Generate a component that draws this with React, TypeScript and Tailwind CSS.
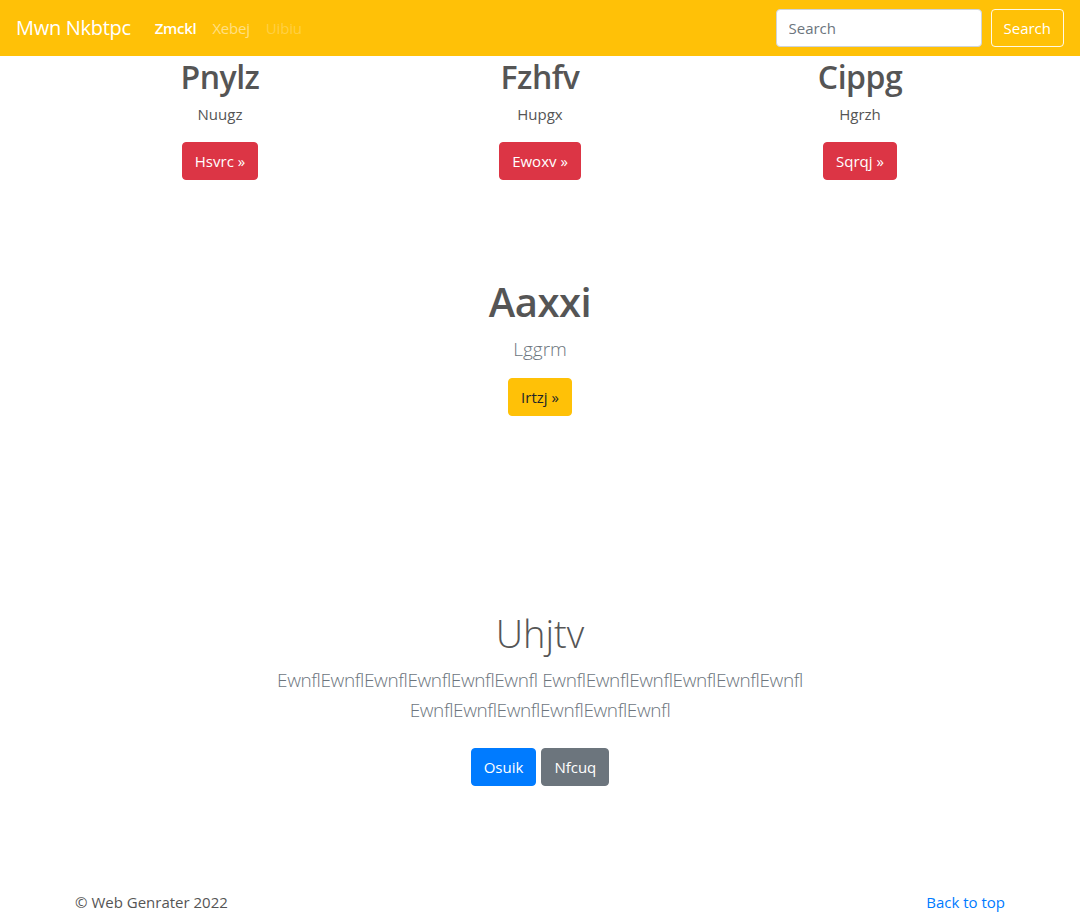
import React from 'react';

const features = [
  { title: 'Pnylz', text: 'Nuugz', cta: 'Hsvrc' },
  { title: 'Fzhfv', text: 'Hupgx', cta: 'Ewoxv' },
  { title: 'Cippg', text: 'Hgrzh', cta: 'Sqrqj' },
];

const font = { fontFamily: '"Open Sans", "Noto Sans", Arial, sans-serif' };

export default function App() {
  return (
    <div className="min-h-[914px] bg-white text-[#555] text-base leading-6" style={font}>
      {/* Navbar */}
      <nav className="h-14 bg-[#ffc107] flex items-center px-4">
        <a href="#" className="text-xl text-white mr-4 leading-[30px] tracking-[-0.3px]">Mwn Nkbtpc</a>
        <ul className="flex items-center">
          <li><a href="#" className="block px-2 text-white font-semibold text-[15px] tracking-[-0.3px]">Zmckl</a></li>
          <li><a href="#" className="block px-2 text-white/50 text-[15px] tracking-[-0.2px]">Xebej</a></li>
          <li><span className="block px-2 text-white/25 text-[15px] tracking-[-0.2px]">Uibiu</span></li>
        </ul>
        <form className="ml-auto flex items-center" onSubmit={e => e.preventDefault()}>
          <input
            type="text"
            placeholder="Search"
            className="w-[206px] h-[38px] px-3 rounded border border-[#ced4da] bg-white text-[15px] placeholder:text-[#6c757d] outline-none mr-[9px]"
          />
          <button className="h-[38px] px-3 rounded border border-white/90 text-white text-[15px]">Search</button>
        </form>
      </nav>

      {/* Feature columns */}
      <section className="w-[960px] mx-auto px-[15px]">
        <div className="grid grid-cols-3 -mx-[15px]">
          {features.map(f => (
            <div key={f.title} className="px-[15px] text-center">
              <h2 className="text-[32px] leading-[38px] pt-[2px] font-semibold tracking-[-0.5px] mb-[6px]">{f.title}</h2>
              <p className="text-[15px] leading-6 mb-4">{f.text}</p>
              <a href="#" className="inline-block h-[38px] leading-[36px] px-3 rounded bg-[#dc3545] border border-[#dc3545] text-white text-[15px]">
                {f.cta} &raquo;
              </a>
            </div>
          ))}
        </div>
      </section>

      {/* Middle call to action */}
      <section className="text-center pt-[98px]">
        <h1 className="text-[40px] leading-[48px] font-semibold tracking-[-0.5px] mb-2">Aaxxi</h1>
        <p className="text-[19px] leading-[30px] font-light text-[#6c757d] mb-[14px]">Lggrm</p>
        <a href="#" className="inline-block h-[38px] leading-[36px] px-3 rounded bg-[#ffc107] border border-[#ffc107] text-[#212529] text-[15px]">
          Irtzj &raquo;
        </a>
      </section>

      {/* Jumbotron */}
      <section className="text-center pt-[193px]">
        <h1 className="text-[38px] leading-[48px] font-light mb-2">Uhjtv</h1>
        <p className="w-[540px] mx-auto text-[19px] leading-[30px] font-light text-[#6c757d] mb-[23px] tracking-[-0.4px]">
          EwnflEwnflEwnflEwnflEwnflEwnfl EwnflEwnflEwnflEwnflEwnflEwnfl EwnflEwnflEwnflEwnflEwnflEwnfl
        </p>
        <div className="flex justify-center gap-[5px]">
          <a href="#" className="inline-block h-[38px] leading-[36px] px-3 rounded bg-[#007bff] border border-[#007bff] text-white text-[15px]">Osuik</a>
          <a href="#" className="inline-block h-[38px] leading-[36px] px-3 rounded bg-[#6c757d] border border-[#6c757d] text-white text-[15px]">Nfcuq</a>
        </div>
      </section>

      {/* Footer */}
      <footer className="w-[960px] mx-auto px-[15px] pt-[104px] flex justify-between text-[15px]">
        <p>&copy; Web Genrater 2022</p>
        <a href="#" className="text-[#007bff]">Back to top</a>
      </footer>
    </div>
  );
}
